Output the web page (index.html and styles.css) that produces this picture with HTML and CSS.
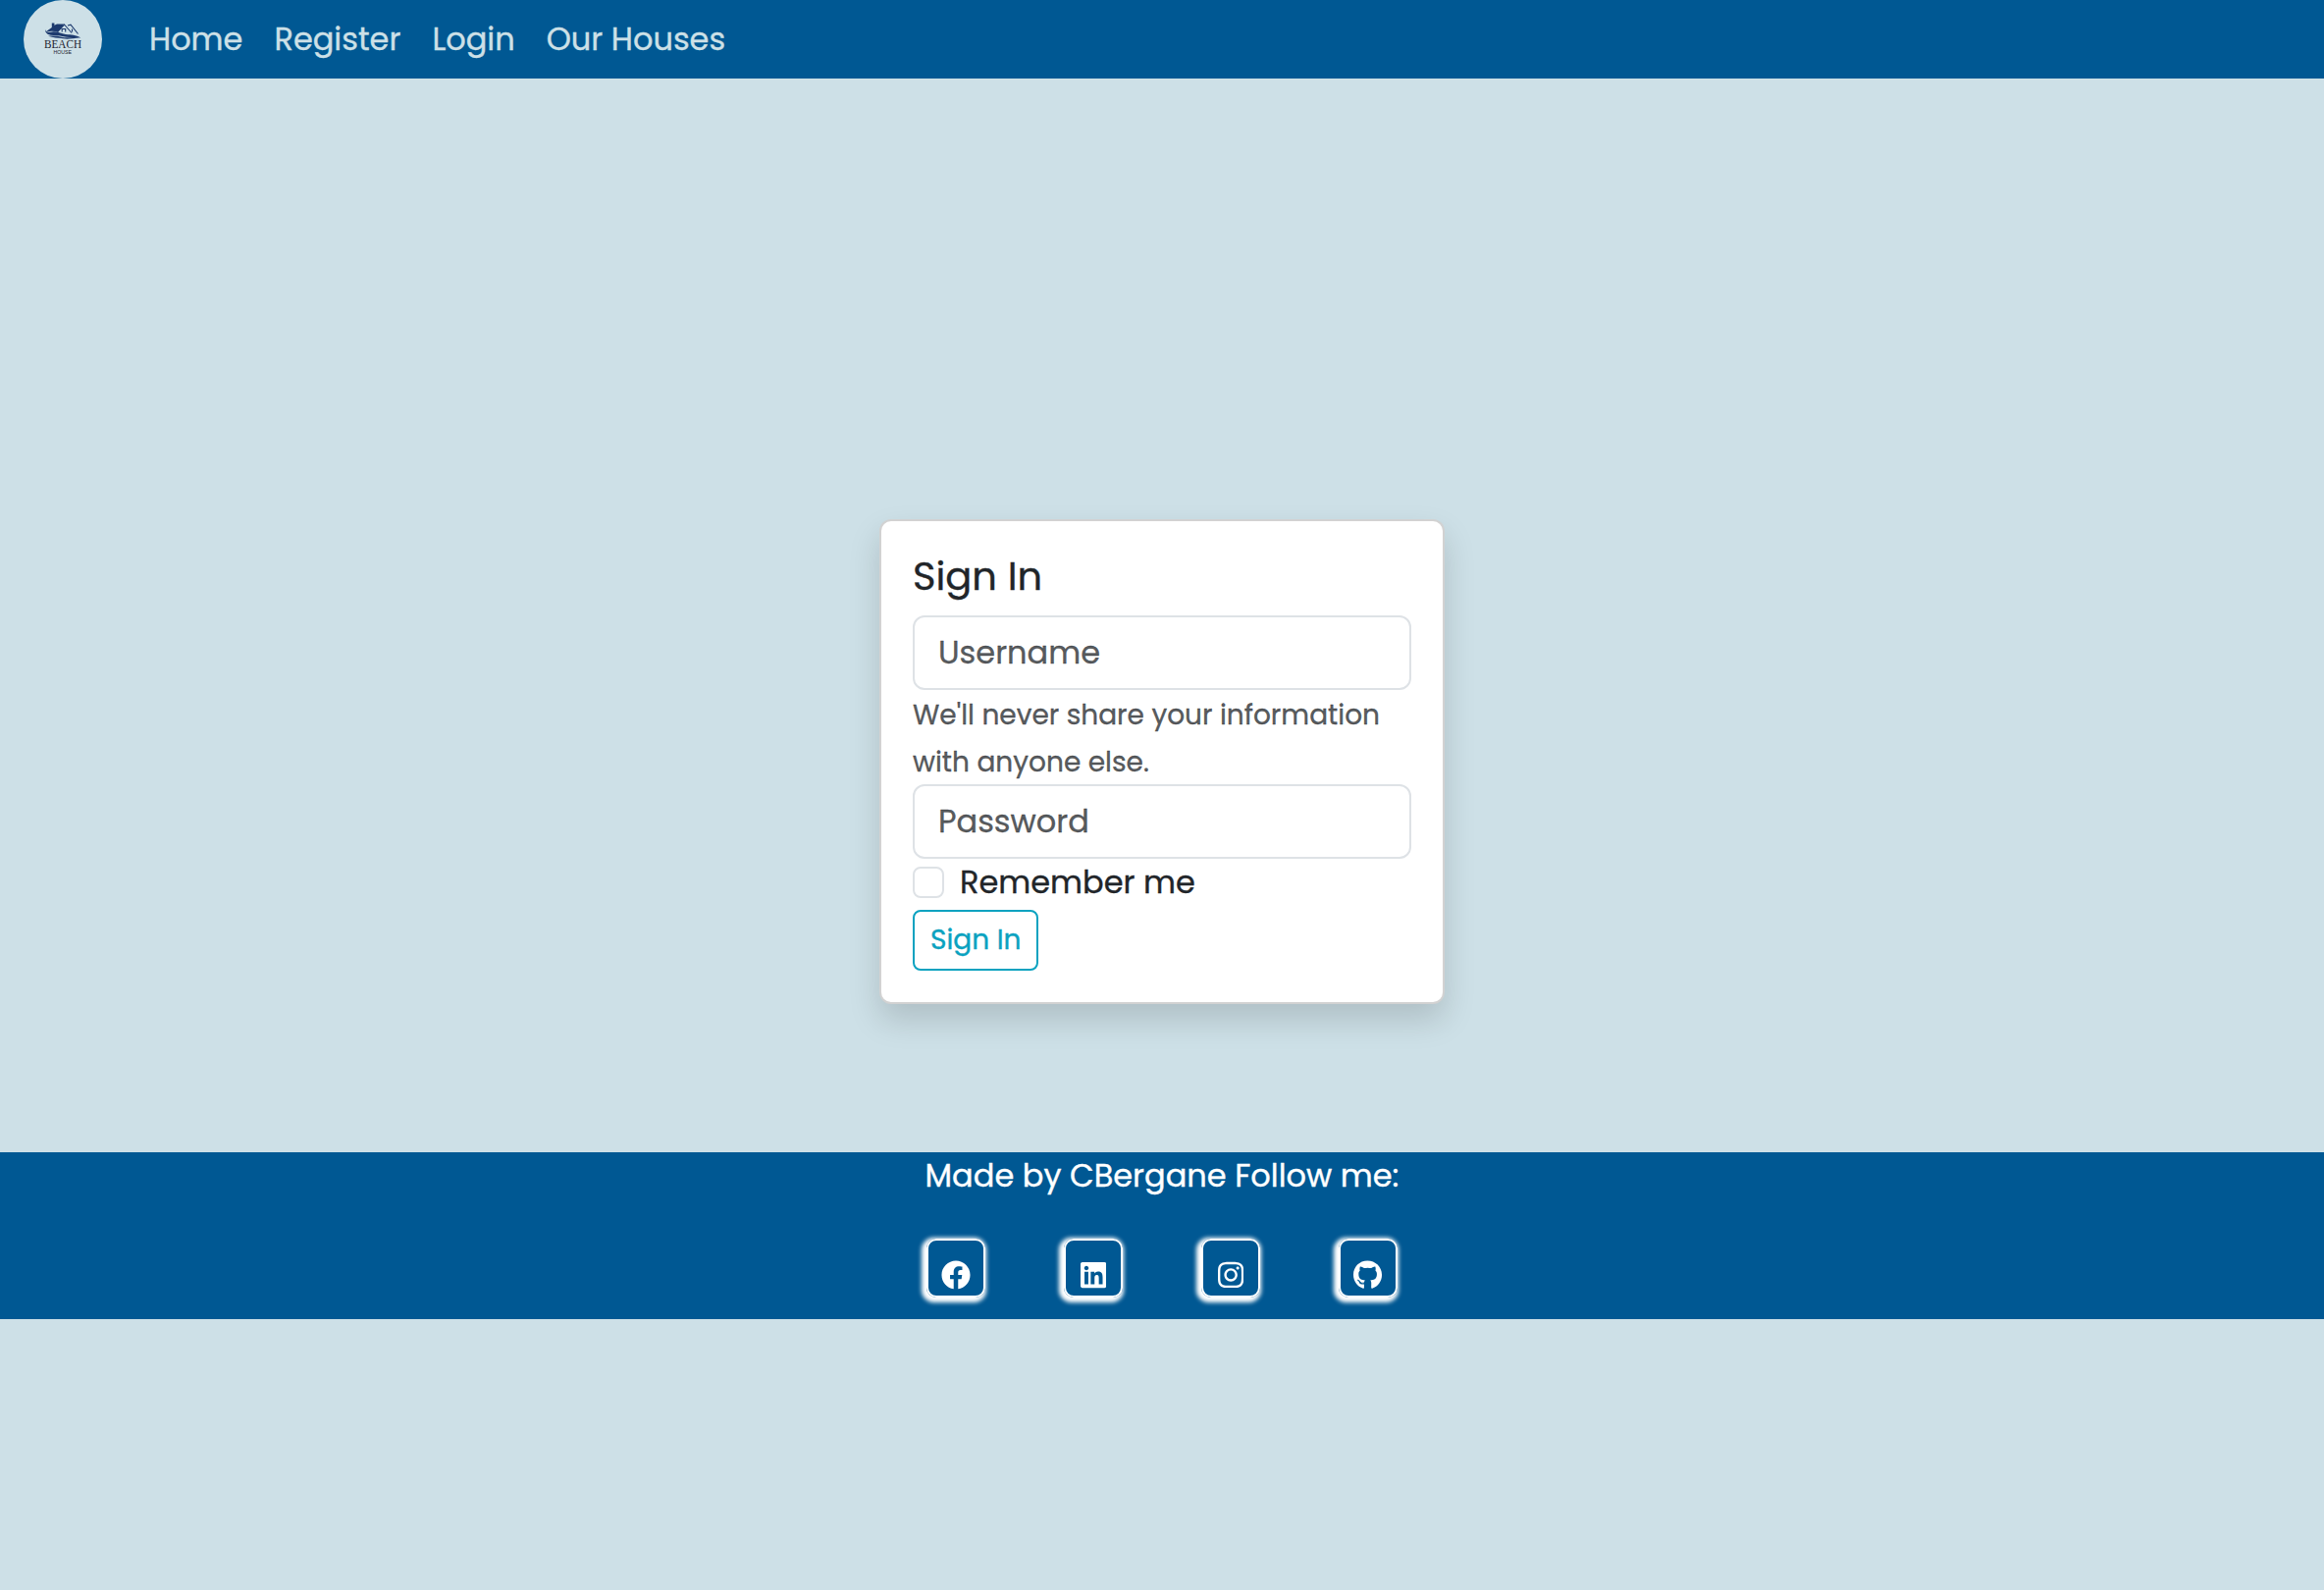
FILE: index.html
```html
<!DOCTYPE html>
<html lang="en">
<head>
<meta charset="utf-8">
<title>Beach House - Sign In</title>
<link rel="stylesheet" href="styles.css">
</head>
<body>
<header class="navbar">
  <a class="brand" href="#" aria-label="Beach House">
    <svg width="80" height="80" viewBox="0 0 80 80">
      <g fill="#1d3a6e">
        <path d="M22.500 32.500 28.800 28V23.600h2.600v2.200L34 24.600h7.500l-6.500 8c-4-1-7.500-1-12.500-.1z"/>
        <path d="M22 30c1 3.500 4 3 7 2.500 6-1 9 2 14 2.500 6 .5 10 .3 15.500 3.600-7-1.600-12 .4-18-1.300-5-1.500-9-1-13-1.600-4-.7-5.500-3-5.500-5.700z"/>
        <path d="M25 36.800c5-.5 9.500-.3 14 1 6 1.500 11-1 18 1.200-6-.2-11 1.300-17 .3-5-.9-9.500-.5-15-2.500z"/>
      </g>
      <path d="M34.500 32.500 41.500 25l7.500 8.500M45 26l3-.8 7.500 9.300M39.200 32.500v-3h3.500v3M49.500 29.500v3" fill="none" stroke="#1d3a6e" stroke-width="1.100"/>
      <text class="brand-name" x="21" y="49" textLength="38" lengthAdjust="spacingAndGlyphs">BEACH</text>
      <text class="brand-sub" x="30.500" y="54.500" textLength="18.500" lengthAdjust="spacingAndGlyphs">HOUSE</text>
    </svg>
  </a>
  <nav class="nav-links">
    <a href="#">Home</a>
    <a href="#">Register</a>
    <a href="#">Login</a>
    <a href="#">Our Houses</a>
  </nav>
</header>

<main class="content">
  <form class="card">
    <h1 class="card-title">Sign In</h1>
    <input class="field" type="text" placeholder="Username">
    <div class="help"><small>We'll never share your information with anyone else.</small></div>
    <input class="field" type="password" placeholder="Password">
    <label class="check"><input type="checkbox"><span>Remember me</span></label>
    <button class="submit" type="button">Sign In</button>
  </form>
</main>

<footer class="footer">
  <p class="credit">Made by CBergane Follow me:</p>
  <div class="socials">
    <a href="#" aria-label="Facebook"><svg width="30" height="30" viewBox="0 0 512 512"><path d="M504 256C504 119 393 8 256 8S8 119 8 256c0 123.780 90.690 226.380 209.250 245V327.690h-63V256h63v-54.640c0-62.150 37-96.480 93.670-96.480 27.140 0 55.520 4.840 55.520 4.840v61h-31.280c-30.800 0-40.410 19.120-40.410 38.730V256h68.780l-11 71.690h-57.780V501C413.310 482.380 504 379.780 504 256z"/></svg></a>
    <a href="#" aria-label="LinkedIn"><svg width="26.250" height="30" viewBox="0 0 448 512"><path d="M416 32H31.900C14.300 32 0 46.500 0 64.300v383.400C0 465.500 14.300 480 31.900 480H416c17.600 0 32-14.500 32-32.300V64.300c0-17.800-14.400-32.300-32-32.300zM135.400 416H69V202.200h66.500V416zm-33.200-243c-21.300 0-38.500-17.300-38.500-38.500S80.900 96 102.200 96c21.200 0 38.500 17.300 38.500 38.500 0 21.300-17.200 38.500-38.500 38.500zm282.100 243h-66.400V312c0-24.800-.5-56.700-34.500-56.700-34.600 0-39.900 27-39.900 54.900V416h-66.400V202.200h63.700v29.200h.9c8.900-16.800 30.600-34.500 62.900-34.500 67.200 0 79.700 44.300 79.700 101.900V416z"/></svg></a>
    <a href="#" aria-label="Instagram"><svg width="26.250" height="30" viewBox="0 0 448 512"><path d="M224.100 141c-63.600 0-114.900 51.300-114.900 114.900s51.300 114.900 114.900 114.900S339 319.500 339 255.900 287.700 141 224.100 141zm0 189.600c-41.100 0-74.700-33.500-74.700-74.700s33.500-74.700 74.700-74.700 74.700 33.500 74.700 74.700-33.600 74.700-74.700 74.700zm146.400-194.300c0 14.900-12 26.800-26.800 26.800-14.900 0-26.800-12-26.800-26.800s12-26.800 26.800-26.800 26.800 12 26.800 26.800zm76.100 27.200c-1.700-35.900-9.900-67.700-36.200-93.900-26.200-26.200-58-34.400-93.900-36.200-37-2.100-147.900-2.100-184.900 0-35.800 1.700-67.600 9.900-93.900 36.100s-34.400 58-36.200 93.900c-2.100 37-2.100 147.900 0 184.900 1.700 35.900 9.900 67.700 36.200 93.900s58 34.400 93.900 36.200c37 2.100 147.900 2.100 184.900 0 35.900-1.700 67.700-9.900 93.900-36.200 26.200-26.200 34.400-58 36.200-93.900 2.100-37 2.100-147.800 0-184.800zM398.800 388c-7.800 19.600-22.900 34.700-42.600 42.600-29.500 11.700-99.500 9-132.100 9s-102.700 2.600-132.100-9c-19.600-7.800-34.700-22.900-42.600-42.600-11.700-29.500-9-99.500-9-132.100s-2.600-102.700 9-132.100c7.800-19.600 22.900-34.700 42.600-42.600 29.500-11.700 99.500-9 132.100-9s102.700-2.600 132.100 9c19.600 7.800 34.700 22.900 42.600 42.600 11.700 29.500 9 99.500 9 132.100s2.700 102.700-9 132.100z"/></svg></a>
    <a href="#" aria-label="GitHub"><svg width="29.060" height="30" viewBox="0 0 496 512"><path d="M165.900 397.400c0 2-2.300 3.600-5.200 3.600-3.300.3-5.600-1.300-5.600-3.600 0-2 2.300-3.600 5.200-3.600 3-.3 5.600 1.300 5.600 3.600zm-31.100-4.500c-.7 2 1.300 4.300 4.300 4.900 2.600 1 5.600 0 6.200-2s-1.300-4.300-4.300-5.200c-2.600-.7-5.500.3-6.200 2.300zm44.200-1.700c-2.900.7-4.900 2.600-4.600 4.900.3 2 2.900 3.300 5.900 2.600 2.900-.7 4.900-2.600 4.600-4.600-.3-1.900-3-3.200-5.900-2.900zM244.800 8C106.100 8 0 113.300 0 252c0 110.900 69.800 205.800 169.500 239.200 12.800 2.300 17.300-5.600 17.300-12.100 0-6.200-.3-40.400-.3-61.400 0 0-70 15-84.700-29.800 0 0-11.400-29.100-27.800-36.600 0 0-22.900-15.700 1.600-15.400 0 0 24.900 2 38.600 25.800 21.900 38.600 58.600 27.500 72.900 20.900 2.300-16 8.800-27.100 16-33.700-55.900-6.200-112.300-14.300-112.300-110.500 0-27.500 7.600-41.300 23.600-58.900-2.600-6.500-11.100-33.300 2.600-67.900 20.900-6.500 69 27 69 27 20-5.600 41.500-8.500 62.800-8.500s42.800 2.900 62.800 8.500c0 0 48.100-33.600 69-27 13.700 34.700 5.200 61.400 2.600 67.900 16 17.700 25.800 31.500 25.800 58.900 0 96.500-58.900 104.200-114.800 110.500 9.200 7.900 17 22.900 17 46.400 0 33.700-.3 75.400-.3 83.600 0 6.500 4.600 14.400 17.300 12.100C428.200 457.800 496 362.900 496 252 496 113.300 383.500 8 244.800 8z"/></svg></a>
  </div>
</footer>
</body>
</html>
```
FILE: styles.css
```css
* { box-sizing: border-box; }

body {
  margin: 0;
  min-height: 100vh;
  background: #cde0e7;
  color: #212529;
  font: 400 32px/48px Poppins, Inter, sans-serif;
  -webkit-text-stroke: 0.350px currentColor;
}

a { color: inherit; text-decoration: none; }

/* Navigation */
.navbar {
  display: flex;
  align-items: center;
  height: 80px;
  padding-left: 24px;
  background: #005893;
  color: #cde0e7;
}
.brand {
  width: 80px;
  height: 80px;
  margin-right: 32px;
  border-radius: 50%;
  background: #cde0e7;
}
.brand svg { display: block; -webkit-text-stroke: 0; }
.brand-name { font: 12px "Liberation Serif", serif; fill: #1c2230; }
.brand-sub { font: 5px "Liberation Sans", sans-serif; fill: #1c2230; }
.nav-links { display: flex; }
.nav-links a { padding: 0 16px; }

/* Sign-in card */
.content {
  display: flex;
  justify-content: center;
  align-items: flex-start;
  height: 1094px;
  padding-top: 449px;
}
.card {
  display: flex;
  flex-direction: column;
  align-items: flex-start;
  width: 576px;
  padding: 32px;
  border: 2px solid rgba(0, 0, 0, 0.175);
  border-radius: 12px;
  background: #fff;
  box-shadow: 0 16px 32px rgba(0, 0, 0, 0.150);
}
.card-title {
  margin: 0 0 16px;
  font-size: 40px;
  font-weight: 400;
  line-height: 48px;
}
.field {
  width: 100%;
  height: 76px;
  padding: 12px 24px;
  border: 2px solid #dee2e6;
  border-radius: 12px;
  background: #fff;
  font: inherit;
}
.field::placeholder { color: rgba(33, 37, 41, 0.750); opacity: 1; }
.help { height: 96px; color: rgba(33, 37, 41, 0.750); }
.help small { font-size: 28px; line-height: 42px; }
.check {
  display: flex;
  align-items: flex-start;
  gap: 16px;
  height: 48px;
  margin-bottom: 4px;
}
.check input {
  appearance: none;
  width: 32px;
  height: 32px;
  margin: 8px 0 0;
  border: 2px solid #dee2e6;
  border-radius: 8px;
  background: #fff;
}
.submit {
  height: 62px;
  padding: 8px 16px;
  border: 2px solid #0aa2c0;
  border-radius: 8px;
  background: transparent;
  color: #0aa2c0;
  font: 28px/42px Poppins, Inter, sans-serif;
}

/* Footer */
.footer {
  display: flex;
  flex-direction: column;
  align-items: center;
  height: 170px;
  background: #005893;
  color: #fff;
}
.credit { margin: 0 0 40px; }
.socials { display: flex; gap: 80px; }
.socials a {
  display: flex;
  justify-content: center;
  width: 60px;
  height: 60px;
  padding-top: 20px;
  border: 2px solid #fff;
  border-radius: 10px;
  box-shadow: -2px 2px 4px 2.500px #fff;
}
.socials svg { display: block; fill: #fff; }
```
